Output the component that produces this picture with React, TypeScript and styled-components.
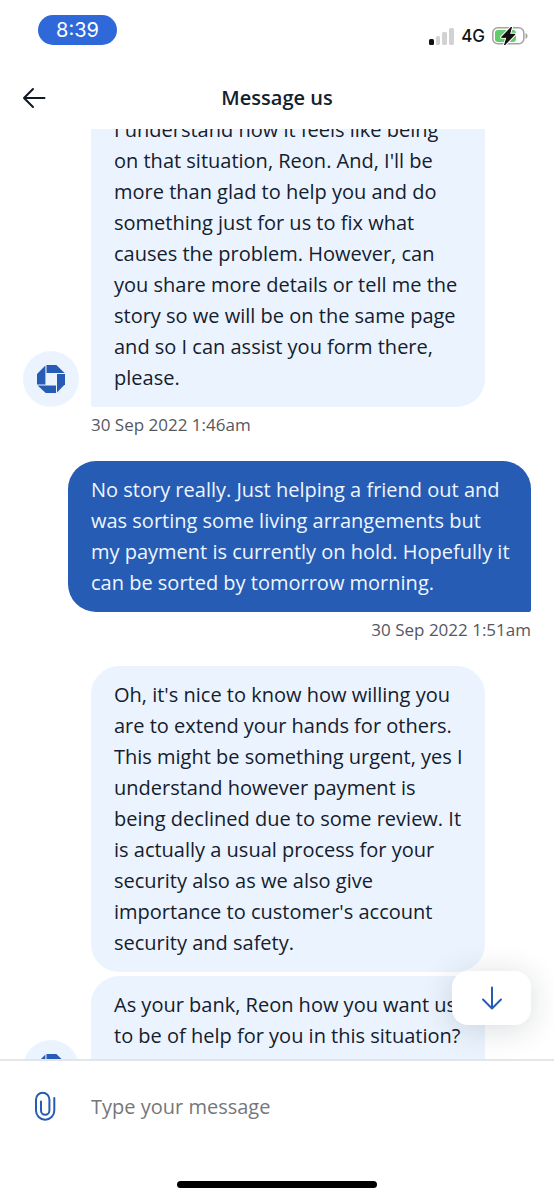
import React, { useLayoutEffect, useRef } from 'react';
import styled, { createGlobalStyle } from 'styled-components';

const GlobalStyle = createGlobalStyle`
  *, *::before, *::after { box-sizing: border-box; }
  body { margin: 0; background: #fff; }
  body, button, input { font-family: 'Open Sans', 'Noto Sans', sans-serif; }
`;

const Screen = styled.div`
  display: flex;
  flex-direction: column;
  height: 100vh;
  background: #fff;
  color: #14202e;
`;

const StatusBar = styled.div`
  display: flex;
  justify-content: space-between;
  align-items: flex-start;
  flex: none;
  height: 66px;
  padding: 15px 26px 0 38px;
  font-family: Inter, sans-serif;
`;

const Clock = styled.div`
  width: 79px;
  border-radius: 15px;
  background: #2f68d8;
  color: #fff;
  font-size: 20px;
  line-height: 30px;
  text-align: center;
`;

const StatusIcons = styled.div`
  display: flex;
  align-items: center;
  gap: 7px;
  height: 42px;
  color: #111;
  font-size: 17px;
  font-weight: 500;
`;

const Header = styled.header`
  display: grid;
  grid-template-columns: 32px 1fr 32px;
  align-items: center;
  flex: none;
  height: 63px;
  padding: 0 18px;
`;

const IconButton = styled.button`
  display: flex;
  align-items: center;
  justify-content: center;
  width: 32px;
  height: 40px;
  padding: 0;
  border: 0;
  background: none;
  color: ${({ color }) => color};
  cursor: pointer;
`;

const Title = styled.h1`
  margin: 0;
  font-size: 20px;
  line-height: 28px;
  font-weight: 600;
  text-align: center;
`;

const Chat = styled.main`
  position: relative;
  flex: 1;
  min-height: 0;
`;

const Scroller = styled.div`
  display: flex;
  flex-direction: column;
  gap: 24px;
  height: 100%;
  padding: 24px 23px;
  overflow-y: auto;
  scrollbar-width: none;
`;

const Group = styled.section<{ $own?: boolean }>`
  display: grid;
  flex: none;
  grid-template-columns: ${({ $own }) => ($own ? '1fr' : '56px 1fr')};
  column-gap: 12px;
  padding-left: ${({ $own }) => ($own ? 45 : 0)}px;
  padding-right: ${({ $own }) => ($own ? 0 : 46)}px;
`;

const Avatar = styled.div`
  display: flex;
  align-items: center;
  justify-content: center;
  align-self: end;
  width: 56px;
  height: 56px;
  border-radius: 50%;
  background: #ebf4fe;
`;

const Stack = styled.div`
  display: flex;
  flex-direction: column;
  gap: 4px;
`;

const Bubble = styled.p<{ $own?: boolean; $last?: boolean }>`
  margin: 0;
  padding: 13px 20px 14px 23px;
  border-radius: ${({ $own, $last }) => ($own ? '28px 28px 2px 28px' : $last ? '28px 28px 28px 2px' : '28px')};
  background: ${({ $own }) => ($own ? '#265cb3' : '#ebf4fe')};
  color: ${({ $own }) => ($own ? '#eef6ff' : '#14202e')};
  font-size: 20px;
  line-height: 31px;
`;

const Time = styled.time<{ $own?: boolean }>`
  grid-column: -2 / -1;
  margin-top: 6px;
  color: #54585e;
  font-size: 17px;
  line-height: 24px;
  text-align: ${({ $own }) => ($own ? 'right' : 'left')};
`;

const JumpButton = styled.button`
  position: absolute;
  right: 23px;
  bottom: 34px;
  display: flex;
  align-items: center;
  justify-content: center;
  width: 79px;
  height: 54px;
  border: 0;
  border-radius: 16px;
  background: #fff;
  color: #265cb3;
  box-shadow: 0 4px 32px rgba(20, 32, 46, 0.16);
  cursor: pointer;
`;

const Composer = styled.form`
  display: flex;
  align-items: center;
  flex: none;
  gap: 30px;
  padding: 25px 23px 0 29px;
  border-top: 2px solid #e2e5e9;
`;

const MessageInput = styled.input`
  flex: 1;
  min-width: 0;
  height: 40px;
  padding: 0;
  border: 0;
  outline: 0;
  background: none;
  color: #14202e;
  font-size: 20px;
  &::placeholder { color: #75777a; opacity: 1; }
`;

const HomeArea = styled.div`
  display: flex;
  justify-content: center;
  align-items: flex-end;
  flex: none;
  height: 74px;
  padding-bottom: 12px;
`;

const HomeIndicator = styled.div`
  width: 36%;
  height: 7px;
  border-radius: 4px;
  background: #000;
`;

const SignalIcon = () => (
  <svg width="25" height="17" viewBox="0 0 25 17" aria-hidden="true">
    <rect x="0" y="11" width="5" height="6" rx="1.5" fill="#111" />
    <rect x="7" y="8" width="4" height="9" rx="1.5" fill="#d2d2d4" />
    <rect x="13" y="4" width="5" height="13" rx="1.5" fill="#d2d2d4" />
    <rect x="20" y="0" width="5" height="17" rx="1.5" fill="#d2d2d4" />
  </svg>
);

const BatteryIcon = () => (
  <svg width="36" height="20" viewBox="0 0 36 20" aria-hidden="true">
    <rect x="0.8" y="1.8" width="31" height="16" rx="5" fill="#fff" stroke="#a3a3a6" strokeWidth="1.5" />
    <rect x="3" y="4" width="21" height="12" rx="3" fill="#63cb69" />
    <path d="M33.5 7v6c1.200-.5 2-1.600 2-3s-.8-2.500-2-3z" fill="#a3a3a6" />
    <path d="M19.500 1 9.500 11.300h5.500L12.500 19 23 8.300h-5.500z" fill="#111" stroke="#fff" strokeWidth="3" strokeLinejoin="round" paintOrder="stroke" />
    <path d="M19.500 1 9.500 11.300h5.500L12.500 19 23 8.300h-5.500z" fill="#111" stroke="#111" strokeWidth="1" strokeLinejoin="round" />
  </svg>
);

const BackIcon = () => (
  <svg width="24" height="22" viewBox="0 0 24 22" fill="none" stroke="currentColor" strokeWidth="2" strokeLinecap="round" strokeLinejoin="round" aria-hidden="true">
    <path d="M22.500 11H2M11 2 2 11l9 9" />
  </svg>
);

const DownIcon = () => (
  <svg width="22" height="24" viewBox="0 0 22 24" fill="none" stroke="currentColor" strokeWidth="2" strokeLinecap="round" strokeLinejoin="round" aria-hidden="true">
    <path d="M11 1.500V22.500M2 13.500l9 9 9-9" />
  </svg>
);

const ClipIcon = () => (
  <svg width="22" height="30" viewBox="0 0 22 30" fill="none" stroke="currentColor" strokeWidth="2" strokeLinecap="round" aria-hidden="true">
    <path d="M20.300 7V19.500a9.150 9.150 0 0 1-18.300 0V8.500a6.700 6.700 0 0 1 13.400 0V19.500a4.200 4.200 0 0 1-8.400 0V10.500" />
  </svg>
);

const BankLogo = () => (
  <svg width="28" height="28" viewBox="0 0 28 28" fill="#265cb3" aria-hidden="true">
    <path d="M9.500 0H19.300L27.600 7.900H9.500z" />
    <path d="M28 8.900V19.200L20 27.600V8.900z" />
    <path d="M19 28H8.700L.6 20.400H19z" />
    <path d="M0 19.400V8.900L8.400.6V19.400z" />
  </svg>
);

type Conversation = { own?: boolean; time: string; messages: string[] };

const conversation: Conversation[] = [
  {
    time: '30 Sep 2022 1:46am',
    messages: [
      "I understand how it feels like being on that situation, Reon. And, I'll be more than glad to help you and do something just for us to fix what causes the problem. However, can you share more details or tell me the story so we will be on the same page and so I can assist you form there, please.",
    ],
  },
  {
    own: true,
    time: '30 Sep 2022 1:51am',
    messages: [
      'No story really. Just helping a friend out and was sorting some living arrangements but my payment is currently on hold. Hopefully it can be sorted by tomorrow morning.',
    ],
  },
  {
    time: '30 Sep 2022 1:55am',
    messages: [
      "Oh, it's nice to know how willing you are to extend your hands for others. This might be something urgent, yes I understand however payment is being declined due to some review. It is actually a usual process for your security also as we also give importance to customer's account security and safety.",
      'As your bank, Reon how you want us to be of help for you in this situation? We can use one of the main needs',
    ],
  },
];

const INITIAL_SCROLL = 52;

export default function App() {
  const scroller = useRef<HTMLDivElement>(null);

  useLayoutEffect(() => {
    if (scroller.current) scroller.current.scrollTop = INITIAL_SCROLL;
  }, []);

  const jumpToLatest = () => {
    const el = scroller.current;
    if (el) el.scrollTo({ top: el.scrollHeight, behavior: 'smooth' });
  };

  return (
    <Screen>
      <GlobalStyle />
      <StatusBar>
        <Clock>8:39</Clock>
        <StatusIcons>
          <SignalIcon />
          <span>4G</span>
          <BatteryIcon />
        </StatusIcons>
      </StatusBar>
      <Header>
        <IconButton type="button" color="#111820" aria-label="Back">
          <BackIcon />
        </IconButton>
        <Title>Message us</Title>
      </Header>
      <Chat>
        <Scroller ref={scroller}>
          {conversation.map(({ own, time, messages }) => (
            <Group key={time} $own={own}>
              {!own && (
                <Avatar>
                  <BankLogo />
                </Avatar>
              )}
              <Stack>
                {messages.map((text, i) => (
                  <Bubble key={text} $own={own} $last={i === messages.length - 1}>
                    {text}
                  </Bubble>
                ))}
              </Stack>
              <Time $own={own}>{time}</Time>
            </Group>
          ))}
        </Scroller>
        <JumpButton type="button" aria-label="Jump to latest message" onClick={jumpToLatest}>
          <DownIcon />
        </JumpButton>
      </Chat>
      <Composer onSubmit={(e) => e.preventDefault()}>
        <IconButton type="button" color="#265cb3" aria-label="Attach a file">
          <ClipIcon />
        </IconButton>
        <MessageInput type="text" aria-label="Message" placeholder="Type your message" />
      </Composer>
      <HomeArea>
        <HomeIndicator />
      </HomeArea>
    </Screen>
  );
}
